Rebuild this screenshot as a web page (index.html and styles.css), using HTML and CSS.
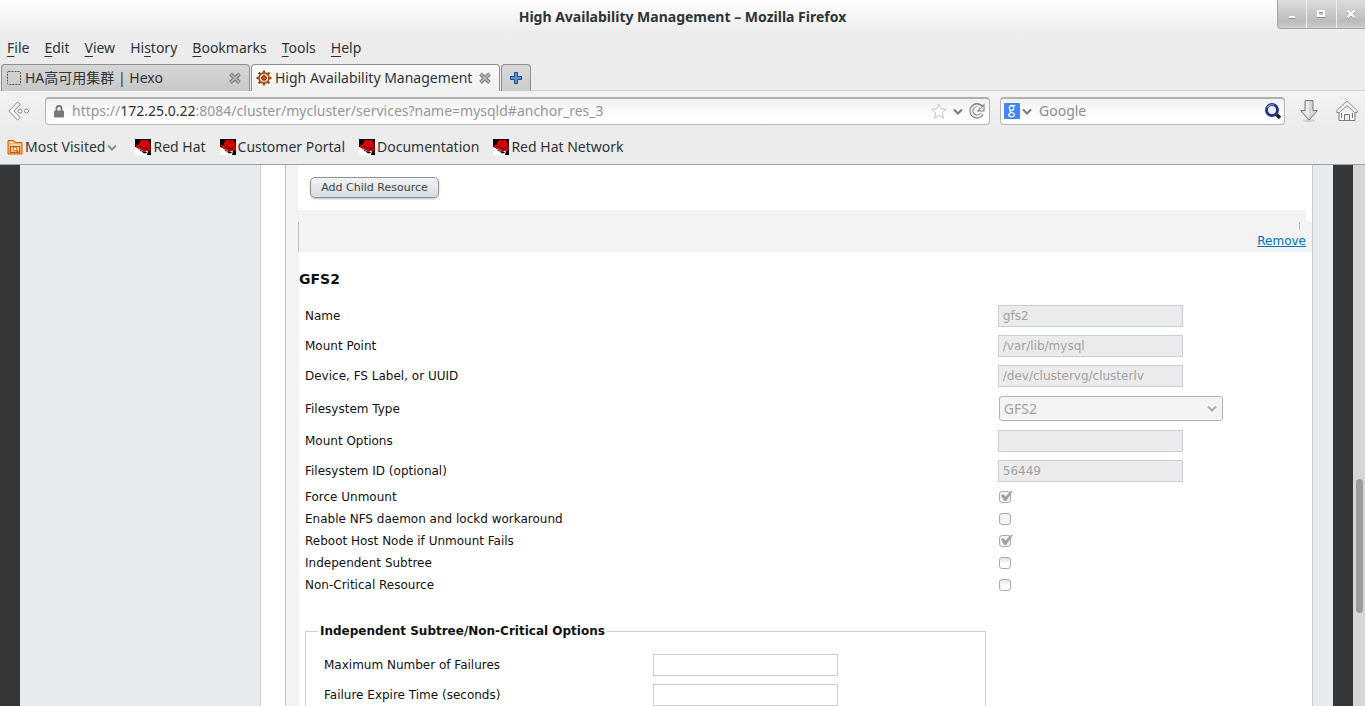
FILE: index.html
```html
<!DOCTYPE html>
<html lang="en">
<head>
<meta charset="utf-8">
<title>High Availability Management</title>
<link rel="stylesheet" href="styles.css">
</head>
<body>
<svg class="defs" aria-hidden="true">
  <symbol id="redhat" viewBox="0 0 16 16">
    <rect width="16" height="16" fill="#000"/>
    <path d="M0 8l4 1.500 5 2.500 5 0-1 4H0z" fill="#fff"/>
    <path d="M6 12l5 .5 1 1.500-3 .5zM4 10.500l3 1-1 1z" fill="#000"/>
    <path d="M13 12h3v4h-4z" fill="#000"/>
    <path d="M3.500 6L5 1.500l3-.8 2 .8 2-.8 2.500 2 .8 4.500.7 3-2 2-5-.5L4 10 .5 7.500 1 6z" fill="#d40000"/>
    <path d="M4 6.500l3 2 4 1.200 3-.7" fill="none" stroke="#4a0000" stroke-width="1"/>
  </symbol>
  <symbol id="chevron" viewBox="0 0 10 7">
    <path d="M1 1.500l4 4 4-4" fill="none" stroke="currentColor" stroke-width="2"/>
  </symbol>
  <symbol id="cross" viewBox="0 0 12 12">
    <path d="M1.500 2l9 8.500M10.500 2l-9 8.500" stroke="#7f817b" stroke-width="3.800"/>
    <path d="M2 2.500l8 7.500M10 2.500l-8 7.500" stroke="#c4c5c0" stroke-width="1.200"/>
  </symbol>
</svg>

<header class="chrome">
  <div class="titlebar">
    <h1 class="window-title">High Availability Management – Mozilla Firefox</h1>
    <div class="window-buttons">
      <button type="button" aria-label="Minimize"><svg width="8" height="10" viewBox="0 0 8 10"><path d="M1 9h6" stroke="#8a8a8a" stroke-width="2"/><path d="M1 8h6" stroke="#fff" stroke-width="2"/></svg></button>
      <button type="button" aria-label="Maximize"><svg width="10" height="10" viewBox="0 0 10 10"><path d="M2 3h6v5H2z" stroke="#8a8a8a" stroke-width="2" fill="none"/><path d="M2 2h6v5H2z" stroke="#fff" stroke-width="2" fill="none"/></svg></button>
      <button type="button" aria-label="Close"><svg width="10" height="10" viewBox="0 0 10 10"><path d="M1.500 2.500l7 7M8.500 2.500l-7 7" stroke="#8a8a8a" stroke-width="2"/><path d="M1.500 1.500l7 7M8.500 1.500l-7 7" stroke="#fff" stroke-width="2.400"/></svg></button>
    </div>
  </div>

  <nav class="menubar">
    <button type="button"><u>F</u>ile</button>
    <button type="button"><u>E</u>dit</button>
    <button type="button"><u>V</u>iew</button>
    <button type="button">Hi<u>s</u>tory</button>
    <button type="button"><u>B</u>ookmarks</button>
    <button type="button"><u>T</u>ools</button>
    <button type="button"><u>H</u>elp</button>
  </nav>

  <div class="tabs">
    <div class="tab">
      <svg width="16" height="16" viewBox="0 0 16 16"><rect x="1.500" y="1.500" width="13" height="13" rx="1" fill="none" stroke="#555" stroke-dasharray="2 1"/></svg>
      <span class="tab-name">HA高可用集群 | Hexo</span>
      <button type="button" aria-label="Close tab"><svg width="12" height="12"><use href="#cross"/></svg></button>
    </div>
    <div class="tab tab-active">
      <svg width="16" height="16" viewBox="0 0 16 16"><rect width="16" height="16" fill="#fff"/><path d="M8 .5v15M.5 8h15M2.700 2.700l10.600 10.600M13.300 2.700L2.700 13.300" stroke="#93481a" stroke-width="2.400"/><circle cx="8" cy="8" r="5" fill="#f3dccb" stroke="#a9541f" stroke-width="1.800"/><circle cx="8" cy="8" r="2.300" fill="#d9541a" stroke="#5c2a12"/></svg>
      <span class="tab-name">High Availability Management</span>
      <button type="button" aria-label="Close tab"><svg width="12" height="12"><use href="#cross"/></svg></button>
    </div>
    <button type="button" class="new-tab" aria-label="New tab"><svg width="12" height="12" viewBox="0 0 12 12"><path d="M4.500.5h3v4h4v3h-4v4h-3v-4h-4v-3h4z" fill="#5f92cf" stroke="#204a87"/></svg></button>
  </div>

  <div class="navbar">
    <button type="button" class="back" aria-label="Back"><svg width="22" height="20" viewBox="0 0 22 20"><path d="M9.500 1L.8 10l8.700 9 2.700-2.500L6 10l6.200-6.500z" fill="#f4f4f4" stroke="#8b8d88"/><circle cx="12" cy="10" r="2" fill="#fff" stroke="#8b8d88"/><circle cx="18.500" cy="10" r="2" fill="#fff" stroke="#8b8d88"/></svg></button>
    <div class="field address">
      <svg class="lock" width="10" height="13" viewBox="0 0 10 13"><path d="M2.500 6V3.500a2.500 2.500 0 0 1 5 0V6" fill="none" stroke="#777" stroke-width="1.800"/><rect y="5.500" width="10" height="7" rx="1" fill="#777"/></svg>
      <span class="url">https://<b>172.25.0.22</b>:8084/cluster/mycluster/services?name=mysqld#anchor_res_3</span>
      <button type="button" aria-label="Bookmark this page"><svg width="16" height="16" viewBox="0 0 16 16"><path d="M8 1l2.100 4.800 5.200.5-4 3.500 1.200 5.200L8 12.300 3.500 15l1.200-5.200-4-3.500 5.200-.5z" fill="#fff" stroke="#c4c4c4"/></svg></button>
      <button type="button" class="dark" aria-label="History"><svg width="10" height="7"><use href="#chevron"/></svg></button>
      <button type="button" aria-label="Reload"><svg width="16" height="16" viewBox="0 0 16 16"><path d="M13 11a5.800 5.800 0 1 1-.5-7" fill="none" stroke="#7c7e7a" stroke-width="4"/><path d="M7.500 8.500h8V.5z" fill="#7c7e7a"/><path d="M12.500 11a5.500 5.500 0 1 1-.4-6.500" fill="none" stroke="#f2f2f2" stroke-width="2"/><path d="M10 7.500h4.500V3z" fill="#f2f2f2"/></svg></button>
    </div>
    <div class="field search">
      <svg width="16" height="16" viewBox="0 0 16 16" role="img" aria-label="Google"><rect width="16" height="16" rx="1" fill="#4285f4"/><ellipse cx="7.500" cy="5" rx="2.200" ry="2.500" fill="none" stroke="#fff" stroke-width="1.300"/><path d="M8.500 2.500h3M6.500 7.500c-1.500 1.500.5 1.800 2 2.300 3 1 2.500 4-.8 4-3.800 0-4-3-.7-3.900" fill="none" stroke="#fff" stroke-width="1.200"/></svg>
      <button type="button" class="dark" aria-label="Choose search engine"><svg width="10" height="7"><use href="#chevron"/></svg></button>
      <input type="text" placeholder="Google" aria-label="Search with Google">
      <button type="button" aria-label="Search"><svg width="18" height="18" viewBox="0 0 18 18"><path d="M12 12l4 4" stroke="#222" stroke-width="3.500"/><circle cx="8" cy="8" r="5.500" fill="#e9edf7" stroke="#27357e" stroke-width="3"/><path d="M3 6a5.500 5.500 0 0 1 7-3" fill="none" stroke="#6f8fd0" stroke-width="1.200"/></svg></button>
    </div>
    <button type="button" class="tool" aria-label="Downloads"><svg width="20" height="24" viewBox="0 0 20 24"><ellipse cx="10" cy="21.500" rx="6" ry="1.500" fill="#ccc"/><path d="M6 1.500h8v10h4.500L10 21 1.500 11.500H6z" fill="#cfd6da" stroke="#777a75"/><path d="M7 2.500h3v16L3.500 12.500H7z" fill="#e6eaec"/></svg></button>
    <button type="button" class="tool" aria-label="Home"><svg width="22" height="22" viewBox="0 0 22 22"><path d="M3 12v8.500h5.500v-6h5v6H19V12" fill="#f6f6f6" stroke="#777a75"/><path d="M11 1L.8 10.500v2h2.500L11 5.600l7.700 6.900h2.500v-2z" fill="#f4f4f4" stroke="#8b8d88"/><path d="M5.500 13v5M16.500 13v5M3 20.500h16" stroke="#777a75"/></svg></button>
  </div>

  <nav class="bookmarks">
    <button type="button"><svg width="16" height="16" viewBox="0 0 16 16"><path d="M1 15V1.500h6l1 2h7V15z" fill="#f6b36a" stroke="#ce5c00"/><path d="M3 3.500h3M3 6h11" stroke="#fff2df"/><rect x="3.500" y="7.500" width="9" height="6" fill="#fbd6a5" stroke="#ce5c00"/><circle cx="8" cy="10" r="2" fill="#fff" stroke="#ce5c00"/><path d="M9.500 11.500l3 3" stroke="#ce5c00" stroke-width="1.500"/></svg><span>Most Visited</span><svg class="more" width="10" height="7"><use href="#chevron"/></svg></button>
    <a href="#redhat"><svg width="16" height="16"><use href="#redhat"/></svg><span>Red Hat</span></a>
    <a href="#portal"><svg width="16" height="16"><use href="#redhat"/></svg><span>Customer Portal</span></a>
    <a href="#docs"><svg width="16" height="16"><use href="#redhat"/></svg><span>Documentation</span></a>
    <a href="#network"><svg width="16" height="16"><use href="#redhat"/></svg><span>Red Hat Network</span></a>
  </nav>
</header>

<div class="viewport">
  <div class="page">
    <aside class="sidebar"></aside>
    <main class="content">
      <div class="resource previous"><button type="button" class="add">Add Child Resource</button></div>
      <div class="gap"></div>
      <div class="remove-bar"><i class="tick"></i><a href="#remove">Remove</a></div>
      <form class="resource-form">
        <h2>GFS2</h2>
        <div class="row"><label for="name">Name</label><input id="name" type="text" value="gfs2" disabled></div>
        <div class="row"><label for="mount">Mount Point</label><input id="mount" type="text" value="/var/lib/mysql" disabled></div>
        <div class="row"><label for="device">Device, FS Label, or UUID</label><input id="device" type="text" value="/dev/clustervg/clusterlv" disabled></div>
        <div class="row row-select"><label for="fstype">Filesystem Type</label><span class="select"><select id="fstype" disabled><option>GFS2</option></select><svg width="10" height="7"><use href="#chevron"/></svg></span></div>
        <div class="row"><label for="options">Mount Options</label><input id="options" type="text" disabled></div>
        <div class="row"><label for="fsid">Filesystem ID (optional)</label><input id="fsid" type="text" value="56449" disabled></div>
        <div class="row row-check"><label for="force">Force Unmount</label><input id="force" type="checkbox" checked disabled></div>
        <div class="row row-check"><label for="nfs">Enable NFS daemon and lockd workaround</label><input id="nfs" type="checkbox" disabled></div>
        <div class="row row-check"><label for="reboot">Reboot Host Node if Unmount Fails</label><input id="reboot" type="checkbox" checked disabled></div>
        <div class="row row-check"><label for="subtree">Independent Subtree</label><input id="subtree" type="checkbox"></div>
        <div class="row row-check"><label for="noncritical">Non-Critical Resource</label><input id="noncritical" type="checkbox"></div>
        <fieldset>
          <legend>Independent Subtree/Non-Critical Options</legend>
          <div class="row"><label for="maxfail">Maximum Number of Failures</label><input id="maxfail" type="text"></div>
          <div class="row"><label for="expire">Failure Expire Time (seconds)</label><input id="expire" type="text"></div>
        </fieldset>
      </form>
    </main>
    <div class="margin"></div>
  </div>
  <div class="scrollbar"><div class="track-before"></div><div class="thumb"></div><div class="track-after"></div></div>
</div>
</body>
</html>
```
FILE: styles.css
```css
* { box-sizing: border-box; }

body {
  margin: 0;
  height: 100vh;
  display: flex;
  flex-direction: column;
  overflow: hidden;
  font: 12px/16px "DejaVu Sans", sans-serif;
  color: #111;
}

button {
  margin: 0;
  padding: 0;
  border: 0;
  background: none;
  font: inherit;
  color: inherit;
}

svg { display: block; flex: none; }
.defs { position: absolute; width: 0; height: 0; }

/* Browser chrome */
.chrome {
  flex: none;
  background: linear-gradient(#fff, #ececec 34px);
  border-bottom: 1px solid #a0a0a0;
  font: 14px/20px "Noto Sans", "Noto Sans CJK SC", sans-serif;
  color: #2e3436;
}

.titlebar {
  height: 36px;
  display: grid;
  grid-template-columns: 88px 1fr 88px;
}
.window-title {
  grid-column: 2;
  margin: 0;
  padding-top: 7px;
  font-size: 14px;
  line-height: 20px;
  font-weight: 700;
  text-align: center;
}
.window-buttons {
  height: 29px;
  display: flex;
  border: 1px solid #a6a6a6;
  border-width: 0 0 1px 1px;
  border-radius: 0 0 0 4px;
  background: linear-gradient(#ddd, #bcbcbc 75%, #cdcdcd);
}
.window-buttons button {
  flex: 1;
  display: flex;
  align-items: center;
  justify-content: center;
}
.window-buttons button + button { border-left: 1px solid #eee; }

.menubar {
  height: 28px;
  padding: 2px 7px 0;
  display: flex;
  gap: 15px;
}
.menubar button { height: 20px; }
.menubar u { text-underline-offset: 3px; }

.tabs {
  height: 27px;
  padding-left: 1px;
  display: flex;
  border-bottom: 1px solid #d2d2d2;
}
.tab {
  width: 249px;
  height: 27px;
  padding: 0 8px 0 4px;
  display: flex;
  align-items: center;
  gap: 3px;
  border: 1px solid #8f8f8f;
  border-width: 1px 1px 0;
  border-radius: 4px 4px 0 0;
  background: linear-gradient(#d6d6d6, #c8c8c8);
}
.tab + .tab { margin-left: 1px; }
.tab-active { background: linear-gradient(#f9f9f9, #f0f0f0); }
.tab-name { flex: 1; white-space: nowrap; }
.new-tab {
  width: 30px;
  height: 27px;
  margin-left: 1px;
  display: flex;
  align-items: center;
  justify-content: center;
  border: 1px solid #8f8f8f;
  border-bottom: 0;
  border-radius: 4px 4px 0 0;
  background: linear-gradient(#d9d9d9, #cbcbcb);
}

.navbar {
  height: 39px;
  padding: 0 7px 0 8px;
  display: flex;
  align-items: center;
  background: linear-gradient(#f2f2f2, #ececec);
}
.back { width: 37px; }
.field {
  height: 28px;
  display: flex;
  align-items: center;
  border: 1px solid #b4b4b4;
  border-top: 2px solid #b0b0b0;
  border-radius: 4px;
  background: linear-gradient(#f1f1f1, #fff 80%);
  color: #959795;
}
.address { flex: 1; padding: 0 4px 0 8px; gap: 6px; }
.url { flex: 1; padding-left: 2px; white-space: nowrap; }
.url b { font-weight: 400; color: #2e3436; }
.dark { color: #7a7c78; }
.search { width: 285px; margin: 0 14px 0 10px; padding: 0 2px 0 3px; gap: 2px; }
.search input {
  flex: 1;
  min-width: 0;
  margin: 0;
  padding: 0 0 0 5px;
  border: 0;
  background: none;
  font: inherit;
}
.search input::placeholder { color: #8c8e8c; }
.tool + .tool { margin-left: 17px; }

.bookmarks {
  height: 34px;
  padding: 0 7px;
  display: flex;
  align-items: center;
  gap: 14px;
}
.bookmarks a, .bookmarks button {
  display: flex;
  align-items: center;
  gap: 2px;
  color: inherit;
  text-decoration: none;
  white-space: nowrap;
}
.bookmarks button { margin-right: 4px; }
.more { color: #8c8e8a; }

/* Web page */
.viewport {
  flex: 1;
  min-height: 0;
  display: flex;
  background: #353637;
}
.page {
  flex: 1;
  margin: 0 20px;
  display: flex;
  overflow: hidden;
  background: #fff;
}
.sidebar {
  width: 241px;
  flex: none;
  border-right: 1px solid #c8ced3;
  background: #e6ebee;
}
.margin {
  width: 21px;
  flex: none;
  border-left: 1px solid #c8ced3;
  background: #e6ebee;
}
.content {
  flex: 1;
  margin-left: 24px;
  padding-left: 12px;
  border-left: 1px solid #bfbfbf;
  background: #f3f3f3;
}
.previous {
  padding: 12px;
  background: #fff;
}
.add {
  display: block;
  width: 129px;
  height: 21px;
  border: 1px solid #8e9295;
  border-radius: 5px;
  background: linear-gradient(#f1f4f6, #d8dcdf);
  box-shadow: 0 1px 2px #bbb;
  font-size: 11px;
  line-height: 19px;
  color: #444;
}
.gap { height: 12px; border-right: 6px solid #fff; }
.remove-bar {
  height: 30px;
  padding-right: 6px;
  display: flex;
  flex-direction: column;
  align-items: flex-end;
  border-left: 1px solid #bfbfbf;
}
.tick { width: 1px; height: 8px; margin-right: 6px; background: #bfbfbf; }
.remove-bar a { margin-top: 3px; color: #0072bc; }

.resource-form {
  height: 100%;
  margin-left: 1px;
  background: #fff;
}
h2 {
  margin: 0;
  padding: 18px 0 13px;
  font-size: 14px;
  line-height: 18px;
}
.row {
  height: 30px;
  padding-left: 6px;
  display: grid;
  grid-template-columns: 68.8% 1fr;
  align-items: center;
}
.row-select { height: 35px; }
.row-check { height: 22px; }
.row input[type="text"] {
  width: 185px;
  height: 22px;
  margin: 0;
  padding: 0 4px;
  border: 1px solid #c8ced3;
  border-radius: 0;
  background: #fff;
  font: inherit;
}
.row input[type="text"]:disabled { background: #ebebeb; color: #a2a2a2; }

.select {
  width: 224px;
  height: 25px;
  margin-left: 1px;
  display: grid;
  align-items: center;
  color: #acacaa;
}
.select > * { grid-area: 1 / 1; }
.select svg { justify-self: end; margin-right: 6px; }
.select select {
  appearance: none;
  width: 100%;
  height: 25px;
  margin: 0;
  padding: 0 4px;
  border: 1px solid #b2b2b0;
  border-radius: 3px;
  background: #f4f4f2;
  font: 14px/20px "Noto Sans", sans-serif;
  color: #a2a2a0;
  opacity: 1;
}

.row input[type="checkbox"] {
  appearance: none;
  position: relative;
  width: 12px;
  height: 12px;
  margin: 0 1px;
  border: 1px solid #a9aba4;
  border-radius: 3px;
  background: linear-gradient(#e4e4e2, #fff 60%);
}
.row input[type="checkbox"]:disabled { background: #f4f4f2; }
.row input[type="checkbox"]:checked::after {
  content: "";
  position: absolute;
  left: 1px;
  top: -1px;
  width: 12px;
  height: 10px;
  background: #a0a09e;
  clip-path: polygon(0 45%, 20% 30%, 38% 55%, 85% 0, 100% 0, 45% 100%, 30% 100%);
}

fieldset {
  width: 681px;
  height: 200px;
  margin: 27px 0 0 6px;
  padding: 11px 0 0 12px;
  border: 1px solid #ccc;
}
legend { padding: 0 2px; font-size: 12px; font-weight: 700; }
fieldset .row { grid-template-columns: 329px 1fr; }

.scrollbar {
  width: 12px;
  flex: none;
  padding: 0 2px 0 3px;
  display: flex;
  flex-direction: column;
  background: #d6d6d6;
}
.track-before { flex: 314; }
.thumb { flex: 134; border-radius: 4px; background: #9b9c9d; }
.track-after { flex: 93; }
```
